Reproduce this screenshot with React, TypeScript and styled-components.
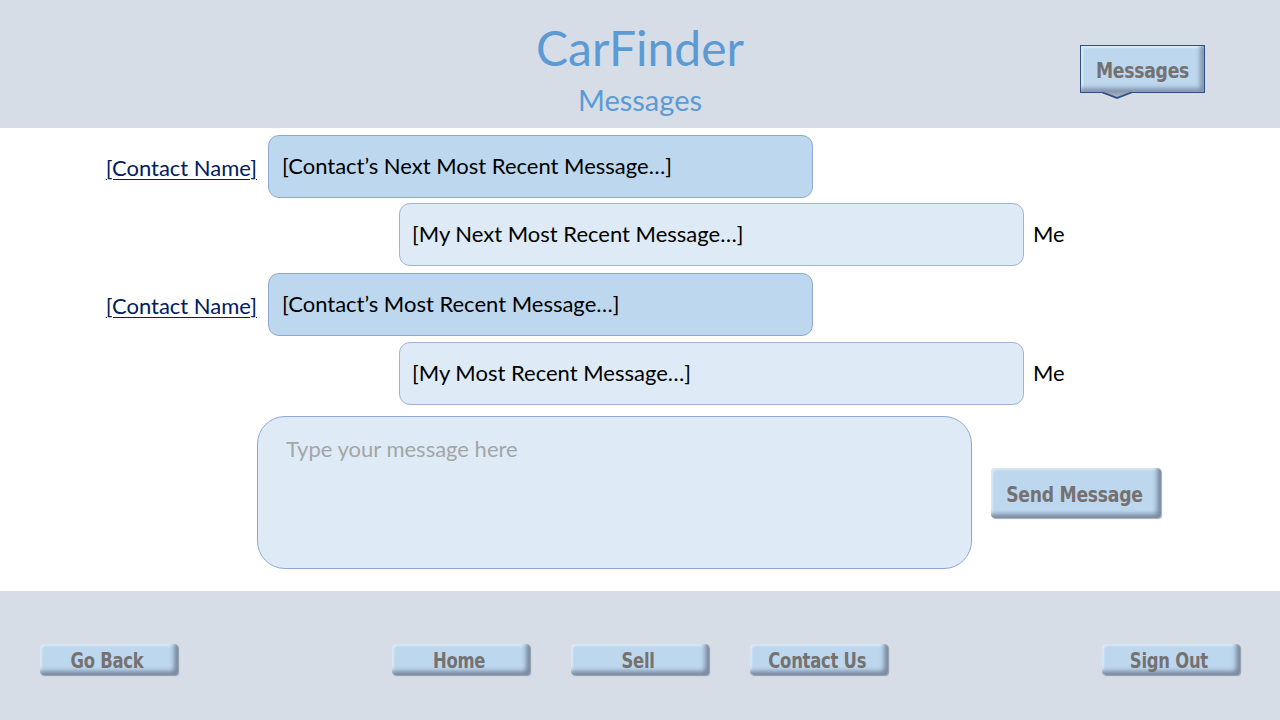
import React from "react";
import styled, { createGlobalStyle } from "styled-components";

const Global = createGlobalStyle`
  html, body { margin: 0; padding: 0; }
  body { width: 1280px; height: 720px; overflow: hidden; background: #ffffff; font-family: Lato, "Open Sans", sans-serif; }
  * { box-sizing: border-box; }
`;

const Page = styled.div`
  width: 1280px;
  height: 720px;
  display: grid;
  grid-template-rows: 128px 1fr 129px;
`;

const Header = styled.header`
  background: #d6dde7;
  display: grid;
  grid-template-columns: 1fr auto 1fr;
  align-items: start;
`;

const TitleBlock = styled.div`
  display: flex;
  flex-direction: column;
  align-items: center;
  color: #5b9bd5;
  padding-top: 19px;
`;

const Title = styled.h1`
  margin: 0;
  font-family: Lato, sans-serif;
  font-weight: 400;
  font-size: 48px;
  line-height: 58px;
`;

const Subtitle = styled.div`
  font-family: Lato, sans-serif;
  font-size: 29px;
  line-height: 34px;
  margin-top: 6px;
`;

const HeaderRight = styled.div`
  display: flex;
  justify-content: flex-end;
  padding: 45px 75px 0 0;
`;

const Callout = styled.div`
  position: relative;
  width: 125px;
  height: 48px;
  background: #bdd7ee;
  border: 1px solid #2f4f86;
  display: flex;
  align-items: center;
  justify-content: center;
  padding-top: 2px;
  box-shadow: inset -4px -4px 4px rgba(60, 70, 95, 0.45), inset 2px 2px 2px rgba(255, 255, 255, 0.5);
  &::before {
    content: "";
    position: absolute;
    left: 18px;
    bottom: -7px;
    width: 36px;
    height: 7px;
    background: #2f4f86;
    clip-path: polygon(0 0, 100% 0, 50% 100%);
  }
  &::after {
    content: "";
    position: absolute;
    left: 20px;
    bottom: -5px;
    width: 32px;
    height: 6px;
    background: linear-gradient(#8a95a8, #a9b8cc);
    clip-path: polygon(0 0, 100% 0, 50% 100%);
  }
`;

const BevelText = styled.span<{ $fs: number }>`
  display: inline-block;
  font-family: "DejaVu Sans Condensed", "DejaVu Sans", sans-serif;
  font-stretch: condensed;
  font-weight: 700;
  font-size: ${(p) => p.$fs}px;
  color: #757171;
  letter-spacing: -0.3px;
  transform: scaleX(0.87);
  white-space: nowrap;
`;

const Main = styled.main`
  background: #ffffff;
  display: flex;
  flex-direction: column;
  padding-top: 7px;
`;

const Row = styled.div<{ $mt: number; $indent: number }>`
  display: flex;
  align-items: center;
  margin-top: ${(p) => p.$mt}px;
  padding-left: ${(p) => p.$indent}px;
  gap: 11px;
`;

const ContactLink = styled.a`
  width: 257px;
  text-align: right;
  font-size: 22px;
  color: #002060;
  text-decoration: underline;
  text-underline-offset: 3px;
  text-decoration-thickness: 1px;
  padding-top: 1px;
`;

const Bubble = styled.div<{ $mine?: boolean }>`
  width: ${(p) => (p.$mine ? 625 : 545)}px;
  height: 63px;
  border-radius: 11px;
  border: 1px solid ${(p) => (p.$mine ? "#9db3dc" : "#8fa7d4")};
  background: ${(p) => (p.$mine ? "#deebf7" : "#bdd7ee")};
  display: flex;
  align-items: center;
  padding-left: ${(p) => (p.$mine ? 12 : 13)}px;
  padding-bottom: 2px;
  font-size: 22px;
  color: #000;
`;

const MeLabel = styled.span`
  font-size: 22px;
  color: #000;
  margin-left: -2px;
  padding-bottom: 2px;
`;

const Composer = styled.div`
  display: flex;
  align-items: center;
  gap: 19px;
  margin-top: 11px;
  padding-left: 257px;
`;

const MessageBox = styled.div`
  width: 715px;
  height: 153px;
  border-radius: 28px;
  border: 1px solid #8fa7d4;
  background: #deebf7;
  padding: 18px 28px;
  font-size: 22px;
  color: #a5a5a5;
`;

const BevelButton = styled.button<{ $w: number; $h: number }>`
  width: ${(p) => p.$w}px;
  height: ${(p) => p.$h}px;
  border: none;
  border-radius: 4px;
  background: #bdd7ee;
  display: flex;
  align-items: center;
  justify-content: center;
  padding: 3px 4px 0 0;
  box-shadow: inset -4px -4px 4px rgba(55, 65, 85, 0.5), inset 2px 2px 2px rgba(255, 255, 255, 0.45), 1px 1px 1px rgba(80, 90, 110, 0.5);
  cursor: pointer;
`;

const Footer = styled.footer`
  background: #d6dde7;
  display: flex;
  align-items: center;
  justify-content: space-between;
  padding: 7px 40px 0 40px;
`;

const NavGroup = styled.nav`
  display: flex;
  gap: 41px;
`;

const FootButton = ({ label }: { label: string }) => (
  <BevelButton $w={138} $h={31}>
    <BevelText $fs={21}>{label}</BevelText>
  </BevelButton>
);

export default function App() {
  return (
    <>
      <Global />
      <Page>
        <Header>
          <div />
          <TitleBlock>
            <Title>CarFinder</Title>
            <Subtitle>Messages</Subtitle>
          </TitleBlock>
          <HeaderRight>
            <Callout>
              <BevelText $fs={22}>Messages</BevelText>
            </Callout>
          </HeaderRight>
        </Header>
        <Main>
          <Row $mt={0} $indent={0}>
            <ContactLink>[Contact Name]</ContactLink>
            <Bubble>[Contact’s Next Most Recent Message…]</Bubble>
          </Row>
          <Row $mt={5} $indent={399}>
            <Bubble $mine>[My Next Most Recent Message…]</Bubble>
            <MeLabel>Me</MeLabel>
          </Row>
          <Row $mt={7} $indent={0}>
            <ContactLink>[Contact Name]</ContactLink>
            <Bubble>[Contact’s Most Recent Message…]</Bubble>
          </Row>
          <Row $mt={6} $indent={399}>
            <Bubble $mine>[My Most Recent Message…]</Bubble>
            <MeLabel>Me</MeLabel>
          </Row>
          <Composer>
            <MessageBox>Type your message here</MessageBox>
            <BevelButton $w={170} $h={50}>
              <BevelText $fs={22}>Send Message</BevelText>
            </BevelButton>
          </Composer>
        </Main>
        <Footer>
          <FootButton label="Go Back" />
          <NavGroup>
            <FootButton label="Home" />
            <FootButton label="Sell" />
            <FootButton label="Contact Us" />
          </NavGroup>
          <FootButton label="Sign Out" />
        </Footer>
      </Page>
    </>
  );
}
